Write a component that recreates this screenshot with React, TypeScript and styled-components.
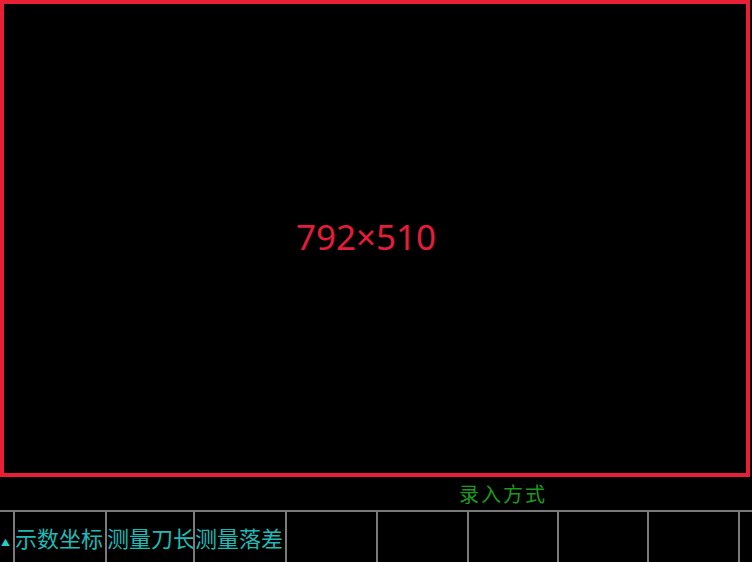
import React from "react";
import styled, { createGlobalStyle } from "styled-components";

const Global = createGlobalStyle`
  html, body { margin: 0; padding: 0; background: #000; }
  body { width: 752px; height: 562px; overflow: hidden; }
`;

const Page = styled.div`
  width: 752px;
  height: 562px;
  background: #000;
  display: flex;
  flex-direction: column;
`;

const Viewport = styled.div`
  box-sizing: border-box;
  width: 750px;
  height: 477px;
  border: 4px solid #e81f35;
  display: flex;
  align-items: center;
  justify-content: center;
`;

const SizeLabel = styled.span`
  font-family: "Noto Sans", "Open Sans", sans-serif;
  font-size: 35px;
  color: #e51d38;
  margin-left: -18px;
  margin-top: -4px;
`;

const StatusLine = styled.div`
  height: 33px;
  display: flex;
  align-items: center;
  padding-left: 459px;
`;

const StatusText = styled.span`
  font-family: "Noto Sans CJK SC", sans-serif;
  font-size: 20px;
  letter-spacing: 2px;
  color: #1d9a1d;
`;

const SoftKeyBar = styled.div`
  flex: 1;
  display: grid;
  grid-template-columns: 13px 92px 88px 92px 91px 91px 90px 90px 91px 14px;
  border-top: 2px solid #7a7a7a;
`;

const Key = styled.div<{ $first?: boolean }>`
  box-sizing: border-box;
  border-left: ${(p) => (p.$first ? "none" : "2px solid #7a7a7a")};
  display: flex;
  align-items: center;
  justify-content: flex-start;
  overflow: visible;
  white-space: nowrap;
  font-family: "Noto Sans CJK SC", sans-serif;
  font-size: 22px;
  line-height: 1;
  color: #1fb9b6;
`;

const Arrow = styled.span`
  font-size: 9px;
  color: #1fd0c8;
  margin-top: 10px;
  margin-left: 1px;
`;

const keys = ["示数坐标", "测量刀长", "测量落差", "", "", "", "", "", ""];

export default function App() {
  return (
    <Page>
      <Global />
      <Viewport>
        <SizeLabel>792×510</SizeLabel>
      </Viewport>
      <StatusLine>
        <StatusText>录入方式</StatusText>
      </StatusLine>
      <SoftKeyBar>
        <Key $first>
          <Arrow>▲</Arrow>
        </Key>
        {keys.map((k, i) => (
          <Key key={i}>{k}</Key>
        ))}
      </SoftKeyBar>
    </Page>
  );
}
